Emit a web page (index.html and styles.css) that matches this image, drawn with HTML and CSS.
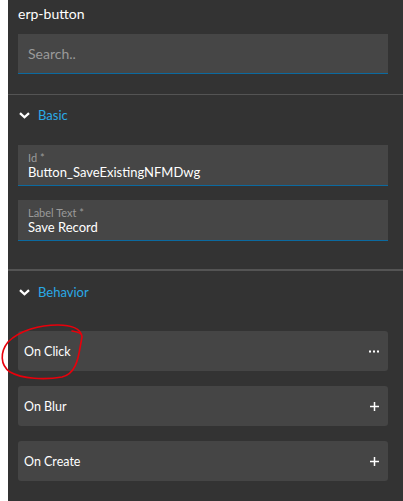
FILE: index.html
```html
<!DOCTYPE html>
<html>
<head>
<meta charset="utf-8">
<link rel="stylesheet" href="styles.css">
</head>
<body>
<div class="panel">
  <div class="title">erp-button</div>
  <div class="search"><span class="placeholder">Search..</span></div>
  <div class="section">
    <div class="sec-head">
      <svg class="chev" width="11" height="7" viewBox="0 0 11 7"><path d="M1 1.2 L5.5 5.3 L10 1.2" fill="none" stroke="#fff" stroke-width="2.3"/></svg>
      <span>Basic</span>
    </div>
    <div class="fields">
      <div class="field"><div class="flabel">Id *</div><div class="fvalue">Button_SaveExistingNFMDwg</div></div>
      <div class="field"><div class="flabel">Label Text *</div><div class="fvalue">Save Record</div></div>
    </div>
  </div>
  <div class="section thick">
    <div class="sec-head">
      <svg class="chev" width="11" height="7" viewBox="0 0 11 7"><path d="M1 1.2 L5.5 5.3 L10 1.2" fill="none" stroke="#fff" stroke-width="2.3"/></svg>
      <span>Behavior</span>
    </div>
    <div class="events">
      <div class="event"><span>On Click</span>
        <svg width="10" height="3" viewBox="0 0 10 3"><rect x="0" y="0.5" width="2" height="2" fill="#fff"/><rect x="4" y="0.5" width="2" height="2" fill="#fff"/><rect x="8" y="0.5" width="2" height="2" fill="#fff"/></svg>
      </div>
      <div class="event"><span>On Blur</span>
        <svg width="9" height="9" viewBox="0 0 9 9"><path d="M4.5 0V9M0 4.5H9" stroke="#fff" stroke-width="1.5"/></svg>
      </div>
      <div class="event"><span>On Create</span>
        <svg width="9" height="9" viewBox="0 0 9 9"><path d="M4.5 0V9M0 4.5H9" stroke="#fff" stroke-width="1.5"/></svg>
      </div>
    </div>
  </div>
  <svg class="annot" width="100" height="70" viewBox="0 0 100 70"><path d="M72 11 C78 12 82 14 82 16 C80 8 70 5 58 5 C40 5 20 10 8 22 C0 32 0 45 10 52 C22 59 45 60 62 57 C75 54 78 40 80 28 C81 22 82 18 82 16" fill="none" stroke="#e8000b" stroke-width="1.6" stroke-linecap="round"/></svg>
</div>
</body>
</html>
```
FILE: styles.css
```css
html, body { margin: 0; padding: 0; background: #fff; }
body { padding-left: 8px; height: 501px; overflow: hidden; }
.panel {
  position: relative;
  background: #333333;
  height: 501px;
  font-family: "Lato", "Open Sans", sans-serif;
  color: #fff;
}
.title { padding: 6px 0 0 10px; font-size: 14px; line-height: 16px; height: 28px; box-sizing: border-box; }
.search {
  margin: 6px 15px 0 10px;
  height: 40px;
  background: #464646;
  border-bottom: 1px solid #0b6aa0;
  box-sizing: border-box;
  display: flex; align-items: center;
  padding-left: 10px;
}
.placeholder { color: #9a9a9a; font-size: 14px; }
.section { border-top: 1px solid #545454; margin-top: 20px; }
.section.thick { border-top: 2px solid #545454; margin-top: 28px; }
.sec-head { display: flex; align-items: center; height: 40px; padding-left: 11px; gap: 8px; color: #2aa9e6; font-size: 13px; }
.section.thick .sec-head { height: 42px; }
.chev { display: block; }
.fields { display: flex; flex-direction: column; gap: 14px; padding-top: 10px; }
.field {
  margin: 0 15px 0 10px;
  height: 41px;
  background: #464646;
  border-bottom: 1px solid #0b6aa0;
  box-sizing: border-box;
  padding: 6px 0 0 10px;
}
.flabel { color: #9a9a9a; font-size: 11px; line-height: 13px; }
.fvalue { color: #fff; font-size: 13px; line-height: 17px; }
.events { display: flex; flex-direction: column; gap: 15px; padding-top: 18px; }
.event {
  margin: 0 15px 0 10px;
  height: 40px;
  background: #454545;
  border-radius: 3px;
  display: flex; align-items: center; justify-content: space-between;
  padding: 0 9px 0 6px;
  font-size: 12.5px;
}
.annot { position: absolute; left: -8px; top: 320px; }
```
